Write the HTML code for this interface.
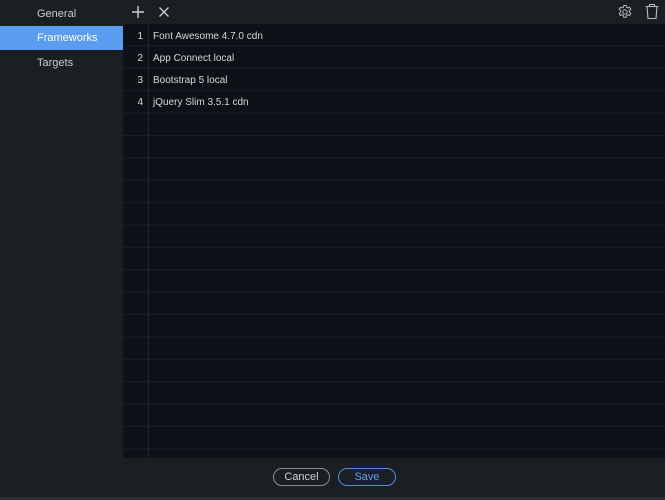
<!DOCTYPE html><html><head><style>
body{margin:0;width:665px;height:500px;background:#1b1e22;font-family:"Liberation Sans",sans-serif;position:relative;overflow:hidden}
.side div{position:absolute;left:0;width:123px;height:24px;line-height:24px;padding-left:37px;box-sizing:border-box;font-size:11px;color:#c9cbcf}
.grid{position:absolute;left:123px;top:24px;width:542px;height:434px;background-color:#0d1017;background-image:linear-gradient(to bottom,transparent 21.4px,#1a1e25 21.4px);background-size:100% 22.4px}
.vl{position:absolute;left:148px;top:24px;width:1px;height:434px;background:#1d2128}
.r{position:absolute;left:123px;width:542px;height:22px;line-height:22px;font-size:10px;color:#d6d8dc}
.r b{font-weight:normal;position:absolute;right:522px}
.r span{position:absolute;left:30px}
.btn{position:absolute;top:468px;height:18px;width:56px;border-radius:10px;box-sizing:border-box;text-align:center;line-height:16px;font-size:11px}
</style></head><body>
<div class="side">
<div style="top:2px">General</div>
<div style="top:26px;background:#5a9cf0;color:#fff;line-height:25px">Frameworks</div>
<div style="top:51px">Targets</div>
</div>
<svg style="position:absolute;left:131px;top:5px" width="14" height="14"><path d="M7 1v12M1 7h12" stroke="#c9cbcf" stroke-width="1.4"/></svg>
<svg style="position:absolute;left:158px;top:6px" width="12" height="12"><path d="M1.5 1.5l9 9M10.5 1.5l-9 9" stroke="#c9cbcf" stroke-width="1.3"/></svg>
<svg style="position:absolute;left:617px;top:4px" width="16" height="16" viewBox="0 0 16 16"><path d="M6.8 1.5h2.4l.4 1.8 1.3.7 1.7-.7 1.2 2-1.4 1.3v1.6l1.4 1.2-1.2 2.1-1.7-.7-1.3.7-.4 1.8H6.8l-.4-1.8-1.3-.7-1.7.7-1.2-2.1 1.4-1.2V6.6L2.2 5.3l1.2-2 1.7.7 1.3-.7z" fill="none" stroke="#b9bbbf" stroke-width="1"/><circle cx="8" cy="8" r="2.2" fill="none" stroke="#b9bbbf"/></svg>
<svg style="position:absolute;left:644px;top:3px" width="16" height="17" viewBox="0 0 16 17"><path d="M1.5 3.5h13M5.5 3.5V1.5h5v2M3 3.5l1 12h8l1-12" fill="none" stroke="#b9bbbf" stroke-width="1.1"/></svg>
<div class="grid"></div><div class="vl"></div>
<div class="r" style="top:25.5px"><b>1</b><span>Font Awesome 4.7.0 cdn</span></div>
<div class="r" style="top:47.5px"><b>2</b><span>App Connect local</span></div>
<div class="r" style="top:69.5px"><b>3</b><span>Bootstrap 5 local</span></div>
<div class="r" style="top:92px"><b>4</b><span>jQuery Slim 3.5.1 cdn</span></div>
<div class="btn" style="left:273px;width:57px;border:1px solid #8a8c90;color:#d0d2d5;line-height:17px">Cancel</div>
<div class="btn" style="left:338px;width:58px;border:1px solid #4a8fe6;color:#5ea0f2;line-height:17px">Save</div>
<div style="position:absolute;left:0;top:497px;width:665px;height:3px;background:#2c2f33"></div>
</body></html>
